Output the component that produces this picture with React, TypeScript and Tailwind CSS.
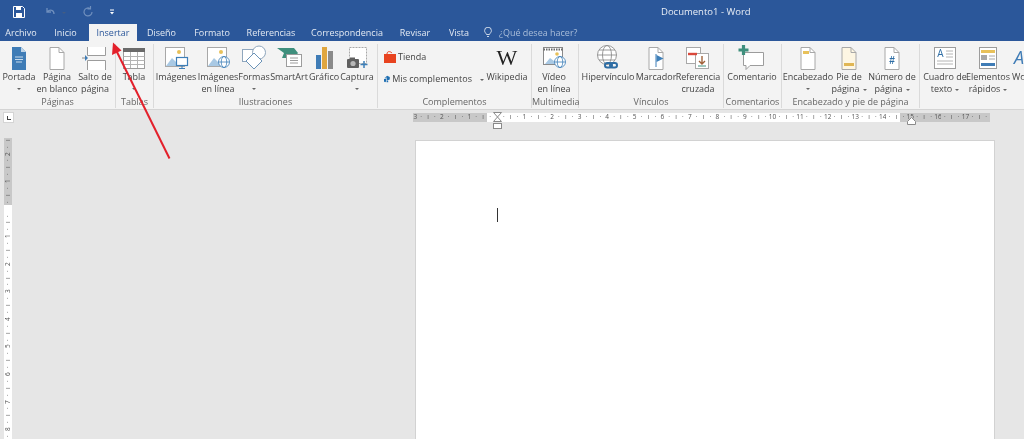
import type { ReactNode } from 'react';

const page = 'M8 3.5h9l5 5v17H8z';
const fold = 'M17 3.5v5h5';

function Ico({ children }: { children: ReactNode }) {
  return (
    <svg width="30" height="27" viewBox="0 0 30 27" className="shrink-0">
      {children}
    </svg>
  );
}

function Doc({ fill = '#ffffff' }: { fill?: string }) {
  return (
    <>
      <path d={page} fill={fill} stroke="#a8a8a8" />
      <path d={fold} fill="none" stroke="#a8a8a8" />
    </>
  );
}

function Picture({ dashed }: { dashed?: boolean }) {
  return (
    <>
      <rect x="4.5" y="3.5" width="19" height="19" fill="#fff" stroke="#a8a8a8" strokeDasharray={dashed ? '2 1' : undefined} />
      <circle cx="18" cy="8" r="2" fill="#e8c15a" />
      <path d="M5 22l6-8 4 4 3-2 5 6z" fill="#a9c9e4" />
    </>
  );
}

function Globe({ x, y, r = 5 }: { x: number; y: number; r?: number }) {
  return (
    <g fill="#fff" stroke="#3e7fb8" strokeWidth="0.8">
      <circle cx={x} cy={y} r={r} />
      <ellipse cx={x} cy={y} rx={r / 2} ry={r} fill="none" />
      <path d={`M${x - r} ${y}h${r * 2}`} />
    </g>
  );
}

const icons: Record<string, ReactNode> = {
  portada: (
    <Ico>
      <path d="M8 3h9l5 5v18H8z" fill="#3f7cb6" />
      <path d="M17 3v5h5z" fill="#bcd3e8" />
      <path d="M11 13h8M11 15.5h8M12 18h6" stroke="#c8dbec" strokeWidth="1" />
    </Ico>
  ),
  blanco: (
    <Ico>
      <Doc />
    </Ico>
  ),
  salto: (
    <Ico>
      <path d="M7.5 3v8.5h18V3M7.5 26v-9.5h18V26" fill="#fff" stroke="#9c9c9c" />
      <path d="M2 14h4" stroke="#8a8a8a" />
      <path d="M8 14l-3-3v6z" fill="#3f7cb6" />
    </Ico>
  ),
  tabla: (
    <Ico>
      <rect x="4.5" y="4.5" width="21" height="20" fill="#fff" stroke="#9c9c9c" />
      <rect x="4" y="4" width="22" height="4" fill="#6a6a6a" />
      <path d="M4.5 12.5h21M4.5 16.5h21M4.5 20.5h21M11.5 8v16M18.5 8v16" stroke="#b4b4b4" />
    </Ico>
  ),
  imagenes: (
    <Ico>
      <Picture />
      <rect x="15.5" y="13.5" width="11" height="8" fill="#fff" stroke="#3e7fb8" strokeWidth="1.2" />
      <path d="M21 22v2M18 24.5h6" stroke="#3e7fb8" />
    </Ico>
  ),
  linea: (
    <Ico>
      <Picture />
      <Globe x={21} y={18} r={5.5} />
    </Ico>
  ),
  formas: (
    <Ico>
      <rect x="3.5" y="5.5" width="12" height="12" fill="#fff" stroke="#8fa6bd" />
      <circle cx="20" cy="8.5" r="6.5" fill="#fff" stroke="#8fa6bd" />
      <path d="M15 9l8 8-8 8-8-8z" fill="#fff" stroke="#6b93b8" />
    </Ico>
  ),
  smartart: (
    <Ico>
      <path d="M3 4h17l4 5-4 5H8l2-5z" fill="#3f8f7d" />
      <rect x="12.5" y="10.5" width="15" height="12" fill="#fff" stroke="#9c9c9c" />
      <path d="M16 14h8M16 16.5h8M16 19h8" stroke="#9c9c9c" />
    </Ico>
  ),
  grafico: (
    <Ico>
      <rect x="7" y="11" width="5" height="14" fill="#3f7cb6" />
      <rect x="13" y="3" width="5" height="22" fill="#e0a63f" />
      <rect x="19" y="7" width="5" height="18" fill="#8a8a8a" />
    </Ico>
  ),
  captura: (
    <Ico>
      <rect x="7.5" y="3.5" width="17" height="16" fill="#fff" stroke="#a8a8a8" strokeDasharray="2 1" />
      <rect x="5" y="15" width="12" height="9" rx="1" fill="#606060" />
      <rect x="8" y="13.5" width="5" height="2" fill="#606060" />
      <circle cx="11" cy="19.5" r="2.6" fill="#b8b8b8" />
      <path d="M22 17v7M18.5 20.5h7" stroke="#3e7fb8" strokeWidth="1.5" />
    </Ico>
  ),
  video: (
    <Ico>
      <rect x="4.5" y="3.5" width="19" height="17" fill="#fff" stroke="#8a8a8a" />
      <path d="M4.5 5.5h19" stroke="#6a6a6a" strokeWidth="2" strokeDasharray="1.5 1" />
      <path d="M6 20l5-6 4 3 3-2 5 5z" fill="#a9c9e4" />
      <circle cx="18" cy="10" r="1.8" fill="#e8c15a" />
      <Globe x={21} y={18} r={5.5} />
    </Ico>
  ),
  hiper: (
    <Ico>
      <g fill="#fff" stroke="#8e8e8e" strokeWidth="0.9">
        <circle cx="14" cy="11" r="9.5" />
        <ellipse cx="14" cy="11" rx="4.5" ry="9.5" fill="none" />
        <path d="M4.5 11h19M6 6h16M6 16h16" />
      </g>
      <g fill="none" stroke="#2e6da4" strokeWidth="2">
        <rect x="12" y="19" width="7" height="4.5" rx="2.2" />
        <rect x="17" y="19" width="7" height="4.5" rx="2.2" />
      </g>
    </Ico>
  ),
  marcador: (
    <Ico>
      <Doc />
      <path d="M15 10v13" stroke="#3e7fb8" />
      <path d="M15.5 11l7 3.5-7 3.5z" fill="#3e7fb8" />
    </Ico>
  ),
  referencia: (
    <Ico>
      <rect x="3.5" y="3.5" width="14" height="16" fill="#fff" stroke="#a8a8a8" />
      <rect x="12.5" y="9.5" width="13" height="15" fill="#fff" stroke="#a8a8a8" />
      <path d="M5 10h9" stroke="#d9493c" strokeWidth="2.4" />
      <path d="M19 12v8M16 17l3 3 3-3" fill="none" stroke="#a0623a" strokeWidth="1.4" />
      <path d="M15 22h8" stroke="#3f8f7d" />
    </Ico>
  ),
  comentario: (
    <Ico>
      <path d="M6.5 8.5h20v13H13l-4 4v-4H6.5z" fill="#fff" stroke="#9c9c9c" />
      <path d="M6.5 1v10M1.5 6h10" stroke="#3f8f7d" strokeWidth="3.2" />
    </Ico>
  ),
  encabezado: (
    <Ico>
      <Doc />
      <rect x="10" y="7" width="6" height="3" fill="#e8c15a" />
    </Ico>
  ),
  pie: (
    <Ico>
      <Doc fill="#fdf6e3" />
      <rect x="10" y="19" width="10" height="3" fill="#e0b654" />
    </Ico>
  ),
  numero: (
    <Ico>
      <Doc />
      <text x="15" y="20" textAnchor="middle" fontSize="10" fontWeight="700" fontFamily="'Liberation Sans', sans-serif" fill="#2e6da4">
        #
      </text>
    </Ico>
  ),
  cuadro: (
    <Ico>
      <rect x="4.5" y="3.5" width="21" height="21" fill="#fff" stroke="#9c9c9c" />
      <text x="10.5" y="13" textAnchor="middle" fontSize="10" fontFamily="'Open Sans', sans-serif" fill="#2e6da4">
        A
      </text>
      <path d="M16 7h7M16 10h7M16 13h7M7 17h16M7 20h16" stroke="#b4b4b4" />
    </Ico>
  ),
  elementos: (
    <Ico>
      <rect x="6.5" y="3.5" width="17" height="21" fill="#fff" stroke="#9c9c9c" />
      <rect x="8" y="6" width="14" height="3" fill="#e8c15a" />
      <rect x="8" y="11" width="6" height="5" fill="#a8a8a8" />
      <path d="M16 12h6M16 15h6" stroke="#a8a8a8" />
      <rect x="8" y="19" width="14" height="3" fill="#3f7cb6" />
    </Ico>
  ),
};

function Chev() {
  return <span className="inline-block w-0 h-0 border-x-[2px] border-x-transparent border-t-[2px] border-t-[#666] align-middle" />;
}

function Btn({ w, icon, lines, chev }: { w: string; icon: string; lines: string[]; chev?: 'below' | 'inline' }) {
  return (
    <div className={`${w} shrink-0 flex flex-col items-center`}>
      <div className="h-[27px] flex justify-center">{icons[icon]}</div>
      {lines.map((l, i) => (
        <div key={l} className="h-[12px] leading-[12px] whitespace-nowrap">
          {l}
          {chev === 'inline' && i === lines.length - 1 && (
            <span className="ml-[3px]">
              <Chev />
            </span>
          )}
        </div>
      ))}
      {chev === 'below' && (
        <div className="h-[12px] flex items-center">
          <Chev />
        </div>
      )}
    </div>
  );
}

function Group({ w, label, children }: { w: string; label: string; children: ReactNode }) {
  return (
    <div className={`${w} h-[64px] shrink-0 flex flex-col border-r border-[#dadada]`}>
      <div className="h-[52px] flex">{children}</div>
      <div className="h-[12px] leading-[12px] text-center text-[#666]">{label}</div>
    </div>
  );
}

const tabs = [
  ['Archivo', 'w-[42px]'],
  ['Inicio', 'w-[47px]'],
  ['Insertar', 'w-[48px] bg-[#f3f3f3] text-[#2b579a]'],
  ['Diseño', 'w-[49px]'],
  ['Formato', 'w-[52px]'],
  ['Referencias', 'w-[66px]'],
  ['Correspondencia', 'w-[86px]'],
  ['Revisar', 'w-[50px]'],
  ['Vista', 'w-[38px]'],
];

// marcas de la regla: 4 por centímetro, el cero cae en la marca i = 0
function rulerMark(i: number) {
  if (i % 4 === 0) return i === 0 ? '' : String(Math.abs(i / 4));
  if (i % 2 !== 0) return '·';
  return 'ı';
}

const hMarks = Array.from({ length: 84 }, (_, k) => k - 11);
const vMarks = Array.from({ length: 45 }, (_, k) => k - 10);

export default function App() {
  return (
    <div className="relative w-[1024px] h-[439px] overflow-hidden flex flex-col bg-[#e6e6e6] text-[9px] text-[#444] font-['Open_Sans',sans-serif] blur-[0.3px]">
      {/* barra de título */}
      <div className="h-[24px] shrink-0 bg-[#2b579a] flex items-center text-white">
        <div className="w-[661px] shrink-0 flex items-center">
          <svg width="12" height="12" viewBox="0 0 12 12" className="ml-[13px]">
            <path d="M.5.5h9l2 2v9H.5z" fill="none" stroke="#fff" />
            <rect x="3" y="1" width="5" height="3" fill="#fff" />
            <rect x="3" y="7" width="6" height="4" fill="#fff" />
          </svg>
          <svg width="14" height="12" viewBox="0 0 14 12" className="ml-[19px]">
            <path d="M3 2v4h4M3.5 5.5C6 3 10 4 10 8" fill="none" stroke="#6f8fbd" strokeWidth="1.3" />
          </svg>
          <span className="ml-[4px] opacity-40">
            <Chev />
          </span>
          <svg width="12" height="12" viewBox="0 0 12 12" className="ml-[16px]">
            <path d="M8 2.5A4 4 0 1 0 10 6M8.5 0v3h-3" fill="none" stroke="#6f8fbd" strokeWidth="1.2" />
          </svg>
          <svg width="6" height="6" viewBox="0 0 6 6" className="ml-[15px]">
            <path d="M1 1h4" stroke="#fff" />
            <path d="M1 3h4L3 5.5z" fill="#fff" />
          </svg>
        </div>
        <span className="text-[9.5px] text-[#e8edf5]">Documento1 - Word</span>
      </div>

      {/* pestañas */}
      <div className="h-[17px] shrink-0 bg-[#2b579a] flex text-[#e4eaf3]">
        {tabs.map(([t, c]) => (
          <div key={t} className={`${c} shrink-0 flex items-center justify-center`}>
            {t}
          </div>
        ))}
        <div className="ml-[6px] flex items-center gap-[7px] text-[#a9bdd9]">
          <svg width="8" height="11" viewBox="0 0 8 11">
            <path d="M2.5 7.5C2 6 .6 5.500.6 3.600a3.400 3.400 0 0 1 6.800 0C7.400 5.500 6 6 5.500 7.500zM3 9.500h2" fill="none" stroke="#dfe6f0" strokeWidth="0.9" />
          </svg>
          ¿Qué desea hacer?
        </div>
      </div>

      {/* cinta */}
      <div className="h-[69px] shrink-0 bg-[#f3f3f3] border-b border-[#d4d4d4] pt-[3px] flex overflow-hidden">
        <Group w="w-[116px]" label="Páginas">
          <Btn w="w-[38px]" icon="portada" lines={['Portada']} chev="below" />
          <Btn w="w-[38px]" icon="blanco" lines={['Página', 'en blanco']} />
          <Btn w="w-[38px]" icon="salto" lines={['Salto de', 'página']} />
        </Group>
        <Group w="w-[38px]" label="Tablas">
          <Btn w="w-[36px]" icon="tabla" lines={['Tabla']} chev="below" />
        </Group>
        <Group w="w-[224px]" label="Ilustraciones">
          <Btn w="w-[44px]" icon="imagenes" lines={['Imágenes']} />
          <Btn w="w-[40px]" icon="linea" lines={['Imágenes', 'en línea']} />
          <Btn w="w-[32px]" icon="formas" lines={['Formas']} chev="below" />
          <Btn w="w-[38px]" icon="smartart" lines={['SmartArt']} />
          <Btn w="w-[32px]" icon="grafico" lines={['Gráfico']} />
          <Btn w="w-[34px]" icon="captura" lines={['Captura']} chev="below" />
        </Group>
        <Group w="w-[154px]" label="Complementos">
          <div className="w-[106px] shrink-0 pl-[6px] pt-[7px] flex flex-col gap-[10px]">
            <div className="h-[12px] flex items-center gap-[2px]">
              <svg width="12" height="12" viewBox="0 0 12 12">
                <path d="M0 3h12v9H0z" fill="#e8431f" />
                <path d="M3 3C3 0 6 0 8 2" fill="none" stroke="#e8431f" />
              </svg>
              Tienda
            </div>
            <div className="h-[12px] flex items-center gap-[2px] whitespace-nowrap">
              <svg width="12" height="12" viewBox="0 0 12 12">
                <path d="M6 0l5 2v5l-5 2-1-1V3L1 4z" fill="#1f6fb2" />
                <path d="M0 6l4-1v6l-2 1-2-1z" fill="#1f6fb2" />
                <path d="M5 9l3 .5V12H5z" fill="#1f6fb2" />
              </svg>
              Mis complementos
              <span className="ml-[6px]">
                <Chev />
              </span>
            </div>
          </div>
          <div className="w-[46px] shrink-0 flex flex-col items-center">
            <div className="h-[27px] flex items-center text-[22px] leading-none text-[#222] font-['Liberation_Serif',serif]">W</div>
            <div className="h-[12px] leading-[12px]">Wikipedia</div>
          </div>
        </Group>
        <Group w="w-[47px]" label="Multimedia">
          <Btn w="w-[44px]" icon="video" lines={['Vídeo', 'en línea']} />
        </Group>
        <Group w="w-[145px]" label="Vínculos">
          <Btn w="w-[58px]" icon="hiper" lines={['Hipervínculo']} />
          <Btn w="w-[38px]" icon="marcador" lines={['Marcador']} />
          <Btn w="w-[46px]" icon="referencia" lines={['Referencia', 'cruzada']} />
        </Group>
        <Group w="w-[58px]" label="Comentarios">
          <Btn w="w-[56px]" icon="comentario" lines={['Comentario']} />
        </Group>
        <Group w="w-[138px]" label="Encabezado y pie de página">
          <Btn w="w-[52px]" icon="encabezado" lines={['Encabezado']} chev="below" />
          <Btn w="w-[30px]" icon="pie" lines={['Pie de', 'página']} chev="inline" />
          <Btn w="w-[56px]" icon="numero" lines={['Número de', 'página']} chev="inline" />
        </Group>
        <div className="flex shrink-0">
          <Btn w="w-[50px]" icon="cuadro" lines={['Cuadro de', 'texto']} chev="inline" />
          <Btn w="w-[36px]" icon="elementos" lines={['Elementos', 'rápidos']} chev="inline" />
          <div className="pl-[6px] flex flex-col">
            <div className="h-[27px] flex items-center text-[18px] text-[#3f7cb6] italic pl-[2px]">A</div>
            <div className="h-[12px] leading-[12px] whitespace-nowrap">WordArt</div>
          </div>
        </div>
      </div>

      {/* regla horizontal */}
      <div className="relative h-[28px] shrink-0 flex items-start text-[6.5px] text-[#555] leading-none">
        <div className="ml-[3px] mt-[2px] w-[11px] h-[11px] bg-white border border-[#d4d4d4] flex items-end justify-center pb-[2px]">
          <div className="w-[4px] h-[4px] border-l border-b border-[#444]" />
        </div>
        <div className="ml-[399px] mt-[3px] h-[9px] flex">
          {hMarks.map((i) => (
            <div
              key={i}
              className={`${i === -11 ? 'w-[4.65px]' : 'w-[6.9px]'} h-[9px] shrink-0 flex items-center justify-center ${i >= 0 && i < 60 ? 'bg-white' : 'bg-[#c8c8c8]'}`}
            >
              {rulerMark(i - 1)}
            </div>
          ))}
        </div>
        <svg width="9" height="18" viewBox="0 0 9 18" className="absolute left-[492.500px] top-[2px]">
          <path d="M.5.5h8L4.500 5zM4.500 5l4 4.500h-8z" fill="#fff" stroke="#8a8a8a" />
          <rect x=".5" y="11.500" width="8" height="5" fill="#fff" stroke="#8a8a8a" />
        </svg>
        <svg width="9" height="8" viewBox="0 0 9 8" className="absolute left-[906.500px] top-[7px]">
          <path d="M4.500.5l4 4v3h-8v-3z" fill="#fff" stroke="#8a8a8a" />
        </svg>
      </div>

      {/* regla vertical y hoja */}
      <div className="flex-1 min-h-0 flex items-start text-[6.5px] text-[#555] leading-none">
        <div className="ml-[4px] w-[8px] shrink-0 flex flex-col">
          {vMarks.map((i) => (
            <div
              key={i}
              className={`${i === -10 ? 'h-[5.45px]' : 'h-[6.9px]'} w-[8px] shrink-0 flex items-center justify-center ${i < 0 ? 'bg-[#c8c8c8]' : 'bg-white'}`}
            >
              <span className="-rotate-90">{rulerMark(i)}</span>
            </div>
          ))}
        </div>
        <div className="ml-[403px] mt-[2px] w-[580px] h-[320px] shrink-0 bg-white border border-[#d2d2d2] pl-[81px] pt-[67px]">
          <div className="w-px h-[14px] bg-[#333]" />
        </div>
      </div>

      {/* flecha roja */}
      <svg width="1024" height="439" viewBox="0 0 1024 439" className="absolute inset-0 pointer-events-none">
        <path d="M169.500 158.500L116 50" stroke="#e3202b" strokeWidth="2" fill="none" />
        <path d="M113 42.500l8.500 8-9.500 4.500z" fill="#e3202b" />
      </svg>
    </div>
  );
}
